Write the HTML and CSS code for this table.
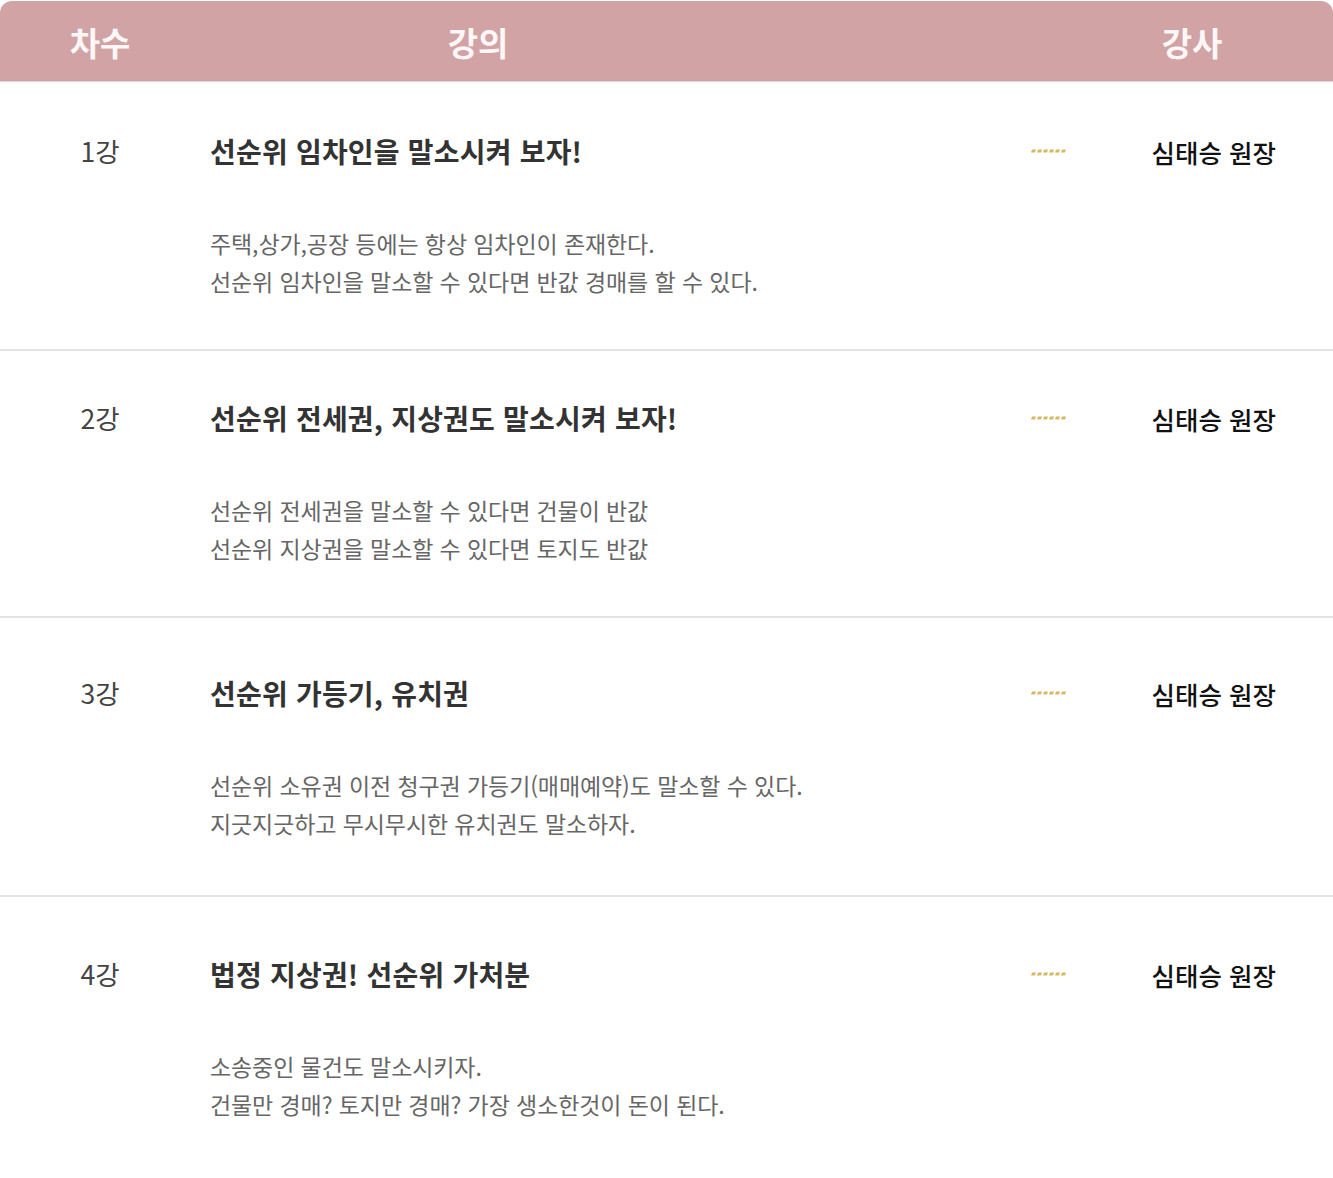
FILE: index.html
```html
<!DOCTYPE html>
<html lang="ko">
<head>
<meta charset="utf-8">
<link rel="stylesheet" href="styles.css">
</head>
<body>
<div class="table">
  <div class="head">
    <div class="hcell hcell-num">차수</div>
    <div class="hcell hcell-title">강의</div>
    <div class="hcell hcell-spacer"></div>
    <div class="hcell hcell-teacher">강사</div>
  </div>

  <div class="row row-1">
    <div class="num">1강</div>
    <div class="body">
      <div class="title">선순위 임차인을 말소시켜 보자!</div>
      <div class="desc">주택,상가,공장 등에는 항상 임차인이 존재한다.<br>선순위 임차인을 말소할 수 있다면 반값 경매를 할 수 있다.</div>
    </div>
    <div class="mark"><svg width="36" height="4" viewBox="0 0 36 4"><g fill="#d6b862"><polygon points="1,3.5 5,3.5 6,0.5 2,0.5"/><polygon points="7,3.5 11,3.5 12,0.5 8,0.5"/><polygon points="13,3.5 17,3.5 18,0.5 14,0.5"/><polygon points="19,3.5 23,3.5 24,0.5 20,0.5"/><polygon points="25,3.5 29,3.5 30,0.5 26,0.5"/><polygon points="31,3.5 35,3.5 36,0.5 32,0.5"/></g></svg></div>
    <div class="teacher">심태승 원장</div>
  </div>

  <div class="row row-2">
    <div class="num">2강</div>
    <div class="body">
      <div class="title">선순위 전세권, 지상권도 말소시켜 보자!</div>
      <div class="desc">선순위 전세권을 말소할 수 있다면 건물이 반값<br>선순위 지상권을 말소할 수 있다면 토지도 반값</div>
    </div>
    <div class="mark"><svg width="36" height="4" viewBox="0 0 36 4"><g fill="#d6b862"><polygon points="1,3.5 5,3.5 6,0.5 2,0.5"/><polygon points="7,3.5 11,3.5 12,0.5 8,0.5"/><polygon points="13,3.5 17,3.5 18,0.5 14,0.5"/><polygon points="19,3.5 23,3.5 24,0.5 20,0.5"/><polygon points="25,3.5 29,3.5 30,0.5 26,0.5"/><polygon points="31,3.5 35,3.5 36,0.5 32,0.5"/></g></svg></div>
    <div class="teacher">심태승 원장</div>
  </div>

  <div class="row row-3">
    <div class="num">3강</div>
    <div class="body">
      <div class="title">선순위 가등기, 유치권</div>
      <div class="desc">선순위 소유권 이전 청구권 가등기(매매예약)도 말소할 수 있다.<br>지긋지긋하고 무시무시한 유치권도 말소하자.</div>
    </div>
    <div class="mark"><svg width="36" height="4" viewBox="0 0 36 4"><g fill="#d6b862"><polygon points="1,3.5 5,3.5 6,0.5 2,0.5"/><polygon points="7,3.5 11,3.5 12,0.5 8,0.5"/><polygon points="13,3.5 17,3.5 18,0.5 14,0.5"/><polygon points="19,3.5 23,3.5 24,0.5 20,0.5"/><polygon points="25,3.5 29,3.5 30,0.5 26,0.5"/><polygon points="31,3.5 35,3.5 36,0.5 32,0.5"/></g></svg></div>
    <div class="teacher">심태승 원장</div>
  </div>

  <div class="row row-4">
    <div class="num">4강</div>
    <div class="body">
      <div class="title">법정 지상권! 선순위 가처분</div>
      <div class="desc">소송중인 물건도 말소시키자.<br>건물만 경매? 토지만 경매? 가장 생소한것이 돈이 된다.</div>
    </div>
    <div class="mark"><svg width="36" height="4" viewBox="0 0 36 4"><g fill="#d6b862"><polygon points="1,3.5 5,3.5 6,0.5 2,0.5"/><polygon points="7,3.5 11,3.5 12,0.5 8,0.5"/><polygon points="13,3.5 17,3.5 18,0.5 14,0.5"/><polygon points="19,3.5 23,3.5 24,0.5 20,0.5"/><polygon points="25,3.5 29,3.5 30,0.5 26,0.5"/><polygon points="31,3.5 35,3.5 36,0.5 32,0.5"/></g></svg></div>
    <div class="teacher">심태승 원장</div>
  </div>
</div>
</body>
</html>
```

FILE: styles.css
```css
html, body {
  margin: 0;
  padding: 0;
  background: #ffffff;
}

body {
  font-family: "Noto Sans CJK KR", "Noto Sans", sans-serif;
  padding-top: 1px;
}

.table {
  width: 1333px;
}

.head {
  display: flex;
  height: 80px;
  background: #d1a3a5;
  border-radius: 12px 12px 0 0;
  border-bottom: 1px solid #dcd4d6;
  align-items: center;
}

.hcell {
  color: #fdf7f7;
  font-size: 33px;
  font-weight: 700;
  text-align: center;
  letter-spacing: 0;
  padding-top: 2px;
}

.hcell-num { width: 200px; }
.hcell-title { width: 556px; }
.hcell-spacer { flex: 1; }
.hcell-teacher { width: 282px; }

.row {
  display: flex;
  align-items: flex-start;
  border-bottom: 2px solid #e2e2e2;
  padding-bottom: 49px;
}

.row-1 { padding-top: 49px; }
.row-2 { padding-top: 47px; }
.row-3 { padding-top: 55px; padding-bottom: 53px; }
.row-4 { padding-top: 57px; border-bottom: none; }

.num {
  width: 200px;
  text-align: center;
  font-size: 26.5px;
  line-height: 40px;
  color: #444444;
  letter-spacing: 0;
}

.body {
  flex: 1;
  margin-left: 10px;
}

.title {
  font-size: 28px;
  line-height: 40px;
  font-weight: 700;
  color: #333333;
  letter-spacing: 0.2px;
}

.desc {
  margin-top: 53px;
  font-size: 23px;
  line-height: 38px;
  color: #666666;
  letter-spacing: -0.1px;
}

.mark {
  width: 36px;
  height: 40px;
  display: flex;
  align-items: center;
  margin-left: 20px;
}

.mark svg {
  display: block;
}

.teacher {
  margin-left: 86px;
  margin-right: 57px;
  font-size: 25.5px;
  line-height: 42px;
  font-weight: 500;
  color: #111111;
  letter-spacing: 0;
  white-space: nowrap;
}
```
